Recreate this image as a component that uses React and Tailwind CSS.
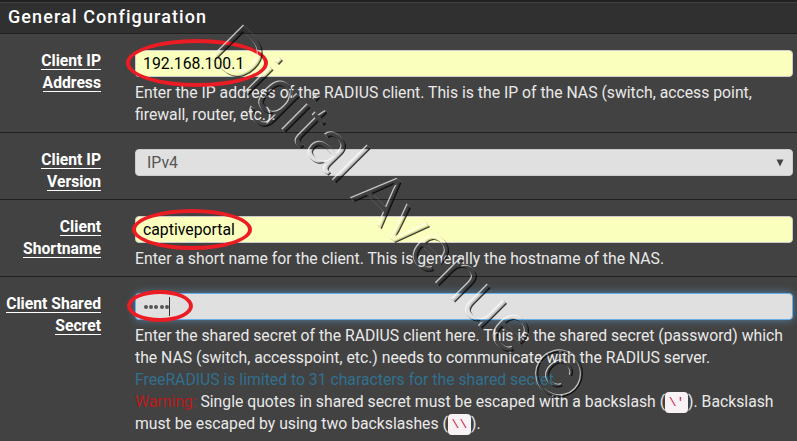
import React from 'react';

const WATERMARK = 'Digital Avenue ©';

function Row({ label, className = '', children }) {
  return (
    <div className={`flex border-b border-[#212121] ${className}`}>
      <div className="w-[101px] shrink-0 pt-[16px] text-right text-[15.7px] leading-[22px] font-bold text-white">
        {label.map((line) => (
          <div key={line} className="h-[22px]">
            <span className="inline-block h-[20px] border-b border-white leading-[22px] whitespace-nowrap">{line}</span>
          </div>
        ))}
      </div>
      <div className="ml-[34px] w-[658px] shrink-0 pt-[16px]">{children}</div>
    </div>
  );
}

function Field({ className = '', children }) {
  return (
    <div className={`relative flex h-[27px] items-center rounded-[4px] border px-[7px] text-[15.8px] ${className}`}>
      {children}
    </div>
  );
}

function Ring({ className }) {
  return <span className={`pointer-events-none absolute rounded-[50%] border-4 border-[#ec1c24] ${className}`} />;
}

function Help({ children }) {
  return <div className="mt-[5px] text-[15.76px] leading-[22px] whitespace-nowrap text-[#e9e9e9]">{children}</div>;
}

function Code({ children }) {
  return (
    <code className="-my-1 inline-block h-[21px] w-[23px] rounded-[4px] bg-[#f9f2f4] text-center align-[1px] font-['Liberation_Mono',monospace] text-[13px] leading-[21px] text-[#c7254e]">
      {children}
    </code>
  );
}

function Watermark() {
  return (
    <svg className="pointer-events-none absolute inset-0" width="797" height="441">
      <defs>
        <filter id="emboss" x="0" y="0" width="797" height="441" filterUnits="userSpaceOnUse" colorInterpolationFilters="sRGB">
          <feOffset in="SourceAlpha" dx="1" dy="1" result="dr" />
          <feOffset in="SourceAlpha" dx="-1" dy="-1" result="ul" />
          <feOffset in="SourceAlpha" dx="-2" dy="-2" result="ul2" />
          <feFlood floodColor="#fff" floodOpacity="0.7" result="white" />
          <feFlood floodColor="#000" floodOpacity="0.7" result="black" />
          <feFlood floodColor="#000" floodOpacity="0.18" result="soft" />
          <feComposite in="white" in2="SourceAlpha" operator="in" result="w" />
          <feComposite in="w" in2="dr" operator="out" result="light" />
          <feComposite in="black" in2="SourceAlpha" operator="in" result="b" />
          <feComposite in="b" in2="ul" operator="out" result="dark" />
          <feComposite in="soft" in2="SourceAlpha" operator="in" result="s" />
          <feComposite in="s" in2="ul2" operator="out" result="shade" />
          <feMerge>
            <feMergeNode in="shade" />
            <feMergeNode in="dark" />
            <feMergeNode in="light" />
          </feMerge>
        </filter>
      </defs>
      <g filter="url(#emboss)">
        <text
          transform="translate(206 53.5) rotate(45)"
          className="font-['Liberation_Sans',sans-serif] text-[68px]"
          textLength="501"
        >
          {WATERMARK}
        </text>
      </g>
    </svg>
  );
}

export default function App() {
  return (
    <div className="relative h-[441px] w-[797px] overflow-hidden bg-[#424242] font-[Roboto,sans-serif]">
      <div className="h-[3px] border-b border-[#424242] bg-[#212121]" />
      <div className="flex h-[31px] items-center border-b border-[#212121] bg-[#303030] pb-[3px] pl-[8px] text-[18px] font-medium tracking-[1.1px] text-white">
        General Configuration
      </div>
      <Row label={['Client IP', 'Address']} className="h-[99px]">
        <Field className="border-[#ccc] bg-[#faffbd] text-black">
          192.168.100.1
          <Ring className="-top-[12px] -left-[10px] h-[48px] w-[142px]" />
        </Field>
        <Help>
          Enter the IP address of the RADIUS client. This is the IP of the NAS (switch, access point,
          <br />
          firewall, router, etc.).
        </Help>
      </Row>
      <Row label={['Client IP', 'Version']} className="h-[67px]">
        <Field className="justify-between border-[#ccc] bg-[#e0e0e0] pl-[11px] text-[#555]">
          IPv4
          <svg width="8" height="8" className="mr-px" viewBox="0 0 8 8">
            <path d="M0.5 0.5H7.5L4 7.5Z" fill="#444" />
          </svg>
        </Field>
      </Row>
      <Row label={['Client', 'Shortname']} className="h-[77px]">
        <Field className="border-[#ccc] bg-[#faffbd] text-black">
          captiveportal
          <Ring className="-top-[8px] -left-[4px] h-[41px] w-[120px]" />
        </Field>
        <Help>Enter a short name for the client. This is generally the hostname of the NAS.</Help>
      </Row>
      <Row label={['Client Shared', 'Secret']} className="h-[170px]">
        <Field className="border-[#66afe9] bg-[#e0e0e0] text-[#555] shadow-[0_0_8px_rgba(102,175,233,0.6)]">
          <span className="flex items-center gap-[1.3px] pl-[0.7px]">
            {[0, 1, 2, 3, 4].map((dot) => (
              <i key={dot} className="h-[4px] w-[4px] rounded-full bg-[#555]" />
            ))}
          </span>
          <span className="h-[19px] w-px bg-[#333]" />
          <Ring className="-top-[4px] -left-[9px] h-[32px] w-[66px]" />
        </Field>
        <Help>
          Enter the shared secret of the RADIUS client here. This is the shared secret (password) which
          <br />
          the NAS (switch, accesspoint, etc.) needs to communicate with the RADIUS server.
          <br />
          <span className="text-[#31708f]">FreeRADIUS is limited to 31 characters for the shared secret.</span>
          <br />
          <span className="text-[#b71c1c]">Warning:</span> Single quotes in shared secret must be escaped with a
          backslash (<Code>\'</Code>). Backslash
          <br />
          must be escaped by using two backslashes (<Code>\\</Code>).
        </Help>
      </Row>
      <Watermark />
    </div>
  );
}
